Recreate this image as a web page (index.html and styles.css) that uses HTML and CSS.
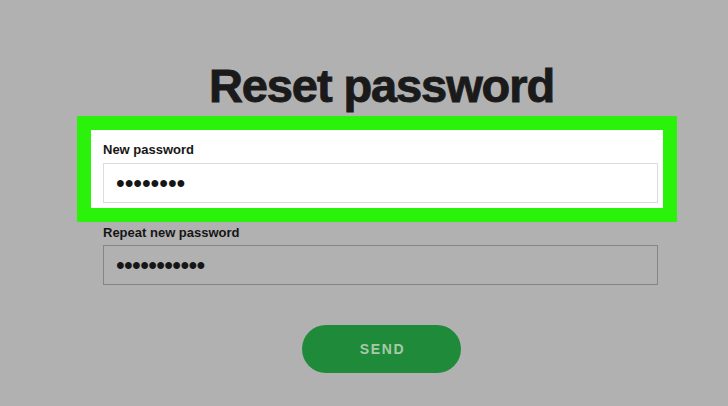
FILE: index.html
```html
<!DOCTYPE html>
<html lang="en">
<head>
<meta charset="utf-8">
<title>Reset password</title>
<link rel="stylesheet" href="styles.css">
</head>
<body>
<main class="page">
  <h1 class="title">Reset password</h1>
  <div class="highlight">
    <label class="field-label">New password</label>
    <div class="field field-light"><span class="dots dots-8">••••••••</span></div>
  </div>
  <label class="field-label field-label-gray">Repeat new password</label>
  <div class="field field-gray"><span class="dots dots-11">•••••••••••</span></div>
  <div class="actions">
    <button class="send">SEND</button>
  </div>
</main>
</body>
</html>
```

FILE: styles.css
```css
html, body {
  margin: 0;
  padding: 0;
  background: #b1b1b1;
  font-family: "Liberation Sans", Arial, sans-serif;
}
.page {
  width: 555px;
  margin-left: 103px;
  padding-top: 58px;
}
.title {
  margin: 0 0 2px 0;
  text-align: center;
  font-size: 47px;
  line-height: 56px;
  font-weight: 700;
  letter-spacing: -1.1px;
  color: #1a1a1a;
  -webkit-text-stroke: 0.9px #1a1a1a;
  padding-left: 2px;
}
.highlight {
  margin: 0 -19px 0 -26px;
  border: 14px solid #2af20b;
  background: #ffffff;
  padding: 0 5px 5px 12px;
}
.field-label {
  display: block;
  font-size: 13px;
  line-height: 16px;
  font-weight: 700;
  color: #161616;
  padding: 12px 0 5px 0;
}
.field-label-gray {
  padding: 3px 0 4px 0;
}
.field {
  height: 40px;
  box-sizing: border-box;
  display: flex;
  align-items: center;
  padding-left: 12px;
}
.field-light {
  border: 1px solid #dcdcdc;
  background: #ffffff;
}
.field-gray {
  border: 1px solid #858585;
  background: #b1b1b1;
}
.dots {
  font-size: 25px;
  line-height: 24px;
  color: #161616;
}
.dots-8 { letter-spacing: -0.1px; }
.dots-11 { letter-spacing: -0.7px; }
.actions {
  display: flex;
  justify-content: center;
  padding-top: 40px;
  padding-left: 2px;
}
.send {
  width: 159px;
  height: 48px;
  border: none;
  border-radius: 24px;
  background: #1f8a3a;
  color: #a8c9a8;
  font-family: "Liberation Sans", Arial, sans-serif;
  font-weight: 700;
  font-size: 14px;
  letter-spacing: 1.6px;
  padding: 0 0 0 2px;
}
```
